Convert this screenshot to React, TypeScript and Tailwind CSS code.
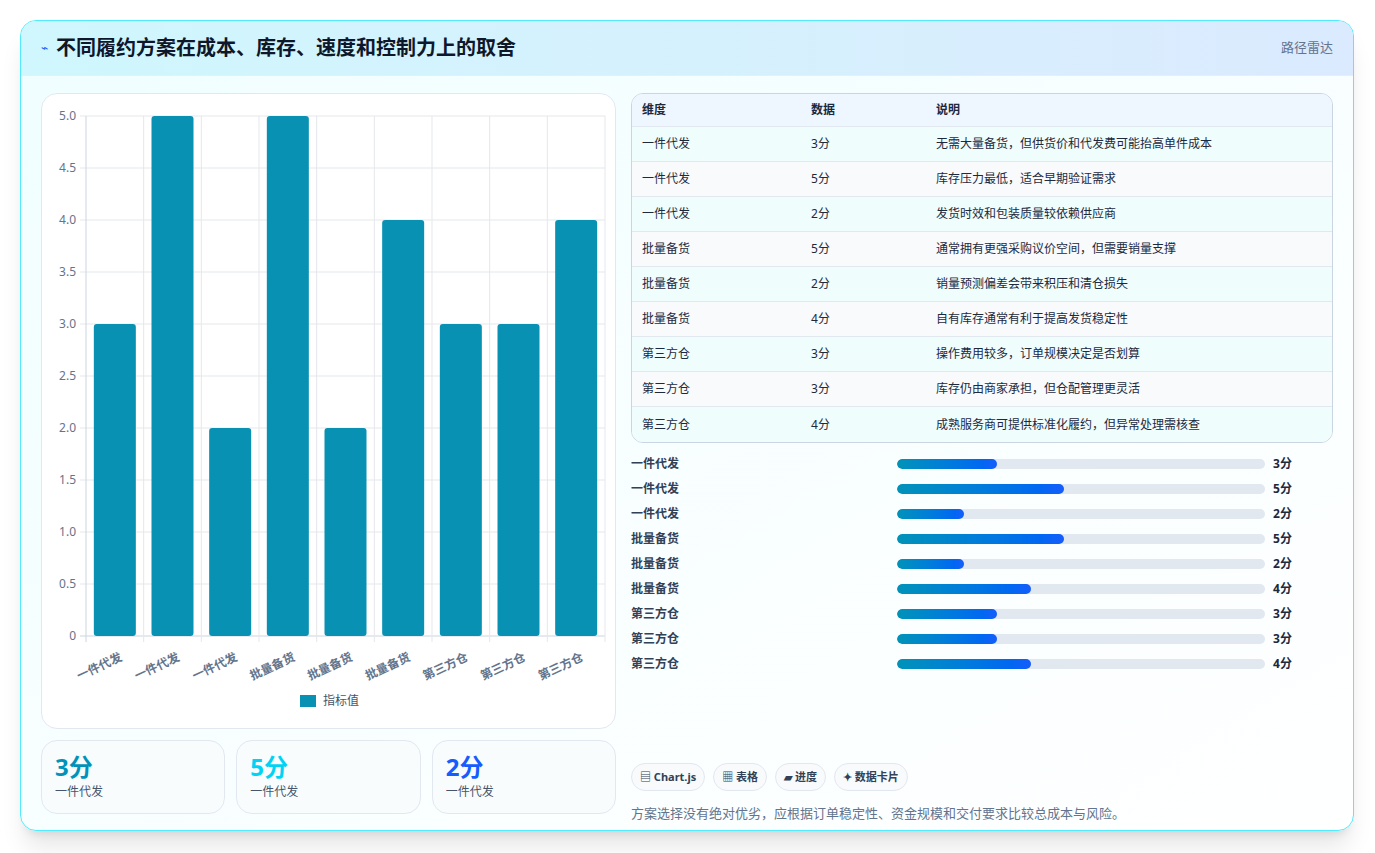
import React from "react";

const rows = [
  ["一件代发", 3, "无需大量备货，但供货价和代发费可能抬高单件成本"],
  ["一件代发", 5, "库存压力最低，适合早期验证需求"],
  ["一件代发", 2, "发货时效和包装质量较依赖供应商"],
  ["批量备货", 5, "通常拥有更强采购议价空间，但需要销量支撑"],
  ["批量备货", 2, "销量预测偏差会带来积压和清仓损失"],
  ["批量备货", 4, "自有库存通常有利于提高发货稳定性"],
  ["第三方仓", 3, "操作费用较多，订单规模决定是否划算"],
  ["第三方仓", 3, "库存仍由商家承担，但仓配管理更灵活"],
  ["第三方仓", 4, "成熟服务商可提供标准化履约，但异常处理需核查"],
] as const;

const font = { fontFamily: '"Noto Sans", "Noto Sans CJK SC", sans-serif' };

const Chart = () => {
  const x0 = 44, x1 = 563, yTop = 22, yBot = 542;
  const step = (x1 - x0) / 9;
  const ticks = [0, 0.5, 1, 1.5, 2, 2.5, 3, 3.5, 4, 4.5, 5];
  return (
    <svg width="575" height="635" className="block">
      {ticks.map((t) => {
        const y = yBot - (t / 5) * (yBot - yTop);
        return (
          <g key={t}>
            <line x1={x0 - 6} x2={x1} y1={y} y2={y} stroke={t === 0 ? "#cbd5e1" : "#e5e7eb"} />
            <text x={x0 - 10} y={y + 4} textAnchor="end" fontSize="12" fill="#64748b">{t === 0 ? "0" : t.toFixed(1)}</text>
          </g>
        );
      })}
      {Array.from({ length: 10 }).map((_, i) => (
        <line key={i} x1={x0 + i * step} x2={x0 + i * step} y1={yTop} y2={yBot + 6} stroke={i === 0 ? "#cbd5e1" : "#e5e7eb"} />
      ))}
      {rows.map((r, i) => {
        const h = (r[1] / 5) * (yBot - yTop);
        const cx = x0 + i * step + step / 2;
        return (
          <g key={i}>
            <rect x={cx - 21} y={yBot - h} width={42} height={h} rx={3} fill="#0891b2" />
            <text x={cx + 8} y={yBot + 24} textAnchor="end" fontSize="12" fontWeight="700" fill="#64748b" transform={`rotate(-25 ${cx + 8} ${yBot + 24})`}>{r[0]}</text>
          </g>
        );
      })}
      <rect x={258} y={601} width={16} height={12} fill="#0891b2" />
      <text x={281} y={611} fontSize="12" fill="#475569">指标值</text>
    </svg>
  );
};

export default function App() {
  return (
    <div className="min-h-[853px] bg-white p-5" style={font}>
      <div className="w-[1334px] h-[811px] rounded-2xl border border-cyan-300 bg-gradient-to-br from-[#f0feff] to-white shadow-xl overflow-hidden flex flex-col">
        <div className="h-[55px] flex items-center justify-between px-5 bg-gradient-to-r from-[#cff7fd] to-[#dbeafe] border-b border-cyan-100">
          <div className="flex items-center gap-2">
            <span className="text-blue-600 text-xs">⌁</span>
            <span className="text-[20px] font-bold text-slate-900">不同履约方案在成本、库存、速度和控制力上的取舍</span>
          </div>
          <span className="text-[13px] text-slate-500">路径雷达</span>
        </div>
        <div className="flex gap-[15px] px-5 pt-[17px]">
          <div className="w-[575px] flex flex-col gap-[11px]">
            <div className="h-[636px] rounded-2xl border border-slate-200 bg-white overflow-hidden">
              <Chart />
            </div>
            <div className="grid grid-cols-3 gap-[11px]">
              {[["3分", "text-cyan-600"], ["5分", "text-cyan-400"], ["2分", "text-blue-600"]].map(([v, c], i) => (
                <div key={i} className="h-[74px] rounded-2xl border border-slate-200 bg-slate-50/60 px-[13px] pt-[10px]">
                  <div className={`text-[24px] font-bold leading-8 ${c}`}>{v}</div>
                  <div className="text-[12px] text-slate-600">一件代发</div>
                </div>
              ))}
            </div>
          </div>
          <div className="w-[705px] flex flex-col">
            <div className="rounded-xl border border-slate-300 overflow-hidden text-[12px]">
              <div className="flex h-[33px] items-center bg-[#eef6ff] font-bold text-slate-800 border-b border-slate-200">
                <div className="w-[179px] pl-[10px]">维度</div>
                <div className="w-[125px]">数据</div>
                <div>说明</div>
              </div>
              {rows.map((r, i) => (
                <div key={i} className={`flex h-[35px] items-center text-slate-800 ${i < 8 ? "border-b border-slate-200" : ""} ${i % 2 ? "bg-slate-50" : "bg-[#effdfd]"}`}>
                  <div className="w-[179px] pl-[10px]">{r[0]}</div>
                  <div className="w-[125px]">{r[1]}分</div>
                  <div>{r[2]}</div>
                </div>
              ))}
            </div>
            <div className="mt-[12px] flex flex-col gap-[7px]">
              {rows.map((r, i) => (
                <div key={i} className="flex h-[18px] items-center text-[12px] font-bold text-slate-700">
                  <div className="w-[266px]">{r[0]}</div>
                  <div className="w-[368px] h-[10px] rounded-full bg-slate-200 overflow-hidden">
                    <div className="h-full rounded-full bg-gradient-to-r from-cyan-600 to-blue-600" style={{ width: `${(r[1] / 11) * 100}%` }} />
                  </div>
                  <div className="ml-2 text-slate-800">{r[1]}分</div>
                </div>
              ))}
            </div>
            <div className="mt-[90px] flex gap-[8px] text-[11px] font-bold text-slate-700">
              {["▤ Chart.js", "▦ 表格", "▰ 进度", "✦ 数据卡片"].map((t) => (
                <span key={t} className="h-[28px] px-[8px] flex items-center rounded-full border border-slate-200 bg-slate-50">{t}</span>
              ))}
            </div>
            <div className="mt-[13px] text-[13px] text-slate-500">方案选择没有绝对优劣，应根据订单稳定性、资金规模和交付要求比较总成本与风险。</div>
          </div>
        </div>
      </div>
    </div>
  );
}
